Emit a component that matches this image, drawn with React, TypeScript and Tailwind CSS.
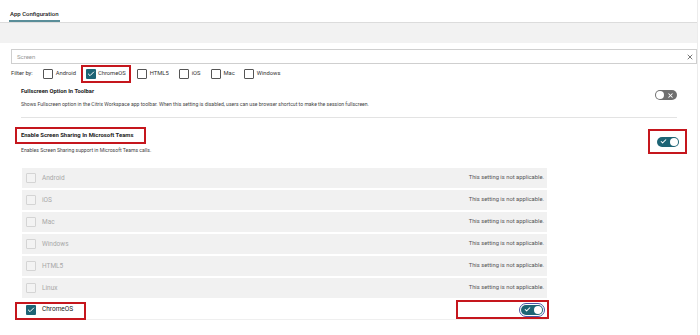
import { X, Check } from "lucide-react";

const PLATFORMS = ["Android", "iOS", "Mac", "Windows", "HTML5", "Linux"];
const FILTERS = [
  { name: "Android", on: false, gap: "mr-[5px]" },
  { name: "ChromeOS", on: true, gap: "mr-[6px]" },
  { name: "HTML5", on: false, gap: "mr-[10px]" },
  { name: "iOS", on: false, gap: "mr-[10px]" },
  { name: "Mac", on: false, gap: "mr-[9px]" },
  { name: "Windows", on: false, gap: "mr-[9px]" },
];

function Box({ on, faded }: { on?: boolean; faded?: boolean }) {
  if (on)
    return (
      <span className="flex h-[10px] w-[10px] shrink-0 items-center justify-center rounded-[1px] bg-[#1d6475]">
        <Check className="h-[8px] w-[8px] text-white" strokeWidth={3} />
      </span>
    );
  return (
    <span
      className={`h-[10px] w-[10px] shrink-0 rounded-[1px] border ${faded ? "border-[#d4d4d4] bg-[#f3f3f3]" : "border-[#555] bg-white"}`}
    />
  );
}

function Toggle({ on, focus }: { on: boolean; focus?: boolean }) {
  if (!on)
    return (
      <span className="relative flex h-[10px] w-[22px] items-center rounded-full bg-[#6f6f6f]">
        <span className="ml-[1px] h-[8px] w-[8px] rounded-full bg-white" />
        <X className="absolute right-[3px] h-[7px] w-[7px] text-white" strokeWidth={3.5} />
      </span>
    );
  return (
    <span
      className={`relative flex h-[10px] w-[22px] items-center justify-end rounded-full bg-[#1d6475] ${focus ? "outline outline-1 outline-offset-1 outline-[#4b55a6]" : ""}`}
    >
      <Check className="absolute left-[3px] h-[7px] w-[7px] text-white" strokeWidth={3.5} />
      <span className="mr-[1px] h-[8px] w-[8px] rounded-full bg-white" />
    </span>
  );
}

export default function App() {
  return (
    <div className="relative h-[335px] w-[700px] overflow-hidden bg-white font-['Roboto','Liberation_Sans',sans-serif] leading-none text-[#333]">
      <div className="h-full w-[698px] border-r border-[#ececec]">
        {/* tab strip */}
        <div className="flex h-[23px] items-end border-b border-[#dcdcdc] pl-[9px]">
          <div className="border-b-2 border-[#5a8e99] px-[1px] pb-[3px] text-[6px] font-medium leading-none text-[#222]">
            App Configuration
          </div>
        </div>
        <div className="h-[20px] bg-[#f2f2f2]" />

        {/* search */}
        <div className="ml-[11px] mt-[6px] flex h-[15px] items-center justify-between border border-[#cfcfcf] pl-[5px] pr-[2px]">
          <span className="text-[6px] text-[#999]">Screen</span>
          <X className="h-[8px] w-[8px] text-[#333]" strokeWidth={2} />
        </div>

        {/* filters */}
        <div className="ml-[11px] mt-[1px] flex h-[18px] items-center text-[5.8px] text-[#333]">
          <span className="mr-[10px]">Filter by:</span>
          {FILTERS.map((f) =>
            f.on ? (
              <span key={f.name} className={`${f.gap} flex h-[18px] items-center gap-[2px] border-2 border-[#c5161d] px-[3px]`}>
                <Box on />
                {f.name}
              </span>
            ) : (
              <span key={f.name} className={`${f.gap} flex items-center gap-[3px]`}>
                <Box />
                {f.name}
              </span>
            ),
          )}
        </div>

        {/* fullscreen setting */}
        <div className="ml-[21px] mr-[20px] mt-[4px] flex items-center justify-between border-b border-[#e3e3e3] pb-[10px]">
          <div>
            <p className="h-[8px] whitespace-nowrap text-[5.8px] font-bold leading-[8px] text-[#222]">Fullscreen Option In Toolbar</p>
            <p className="mt-[6px] h-[6px] text-[5.1px] leading-[6px] text-[#444]">
              Shows Fullscreen option in the Citrix Workspace app toolbar. When this setting is disabled, users can use browser shortcut to make the session fullscreen.
            </p>
          </div>
          <div className="mt-[-4px]">
            <Toggle on={false} />
          </div>
        </div>

        {/* screen sharing setting */}
        <div className="ml-[15px] mr-[10px] mt-[9px] flex items-start justify-between">
          <div>
            <p className="flex h-[17px] w-[131px] items-center whitespace-nowrap border-2 border-[#c5161d] pl-[4px] text-[5.9px] font-bold text-[#222]">
              Enable Screen Sharing In Microsoft Teams
            </p>
            <p className="ml-[6px] mt-[3px] h-[6px] text-[5.1px] leading-[6px] text-[#444]">
              Enables Screen Sharing support in Microsoft Teams calls.
            </p>
          </div>
          <div className="mt-[2px] flex h-[25px] w-[39px] items-center justify-center border-2 border-[#c5161d]">
            <Toggle on />
          </div>
        </div>

        {/* platform list */}
        <div className="ml-[22px] mt-[14px] flex w-[525px] flex-col gap-[2px]">
          {PLATFORMS.map((p) => (
            <div key={p} className="flex h-[20px] items-center justify-between bg-[#f1f1f1] pl-[4px] pr-[3px]">
              <span className="flex items-center gap-[6px] text-[6.5px] text-[#a8a8a8]">
                <Box faded />
                {p}
              </span>
              <span className="text-[5.8px] text-[#555]">This setting is not applicable.</span>
            </div>
          ))}
          <div className="relative flex h-[20px] items-center justify-between border-b border-[#efefef] pl-[4px] pr-[3px]">
            <span className="flex items-center gap-[6px] text-[6.5px] text-[#222]">
              <Box on />
              ChromeOS
            </span>
            <span className="mr-[1px]">
              <Toggle on focus />
            </span>
            <span className="pointer-events-none absolute left-[-7px] top-[2px] h-[18px] w-[71px] border-2 border-[#c5161d]" />
            <span className="pointer-events-none absolute right-[-2px] top-0 h-[19px] w-[93px] border-2 border-[#c5161d]" />
          </div>
        </div>
      </div>
    </div>
  );
}
